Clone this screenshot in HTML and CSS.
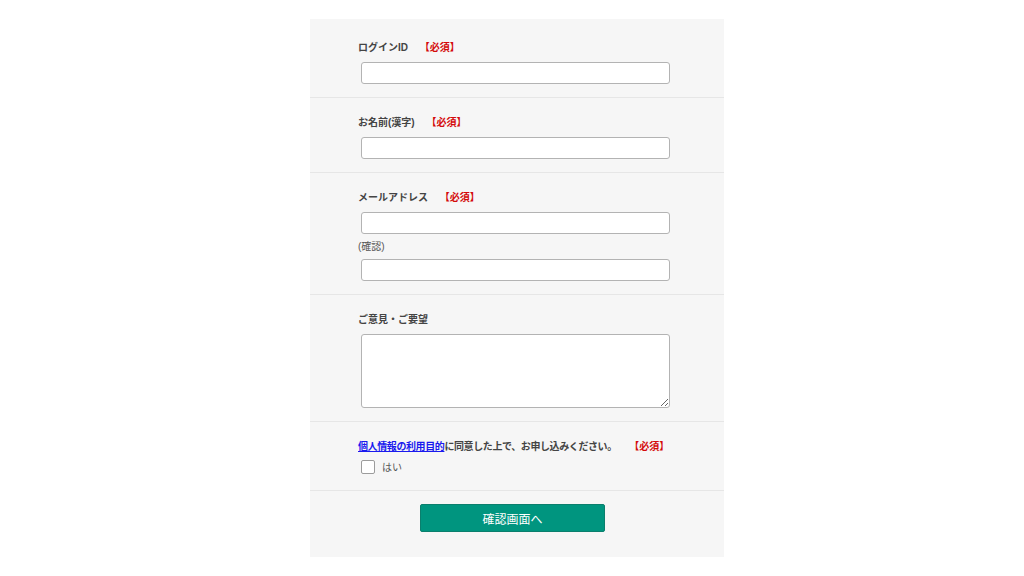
FILE: index.html
```html
<!DOCTYPE html>
<html lang="ja">
<head>
    <meta charset="UTF-8">
    <meta name="viewport" content="width=device-width, initial-scale=1.0">
    <title>お問い合わせ</title>
    <link rel="stylesheet" href="styles.css">
</head>
<body>

    <form class="form-box" onsubmit="return false;">

        <div class="row first">
            <p class="label">ログインID <span class="req">【必須】</span></p>
            <input type="text" class="field" id="loginId">
        </div>

        <div class="row">
            <p class="label">お名前(漢字) <span class="req">【必須】</span></p>
            <input type="text" class="field" id="name">
        </div>

        <div class="row">
            <p class="label">メールアドレス <span class="req">【必須】</span></p>
            <input type="email" class="field" id="email">
            <p class="sub-label">(確認)</p>
            <input type="email" class="field" id="emailConfirm">
        </div>

        <div class="row">
            <p class="label">ご意見・ご要望</p>
            <textarea class="field area" id="comment"></textarea>
        </div>

        <div class="row agree">
            <p class="label"><a href="#">個人情報の利用目的</a>に同意した上で、お申し込みください。 <span class="req wide">【必須】</span></p>
            <label class="check"><input type="checkbox" id="agree"> <span>はい</span></label>
        </div>

        <div class="row submit">
            <button type="submit" class="btn">確認画面へ</button>
        </div>

    </form>

</body>
</html>
```

FILE: styles.css
```css
body { margin: 0; background: #fff; font-family: "Liberation Sans", "Noto Sans CJK JP", sans-serif; color: #444; }
.form-box { width: 414px; margin: 19px 0 0 310px; background: #f6f6f6; padding-top: 4px; }
.row { padding: 18px 0 13px 48px; border-bottom: 1px solid #e6e6e6; }
.label { margin: 0 0 7px; font-size: 10px; line-height: 14px; font-weight: bold; color: #444; }
.req { color: #d40b0b; margin-left: 9px; }
.req.wide { margin-left: 10px; letter-spacing: 0; }
.label a { color: #1a1aee; text-decoration: underline; }
.sub-label { margin: 6px 0 5px; font-size: 10px; line-height: 14px; color: #555; }
.field { display: block; box-sizing: border-box; width: 309px; height: 22px; margin: 0 0 0 3px; padding: 2px 5px; border: 1px solid #b3b3b3; border-radius: 3px; background: #fff; font-size: 12px; }
.area { height: 74px; resize: vertical; }
.check { display: flex; align-items: center; gap: 7px; margin-left: 3px; font-size: 10px; color: #555; }
.check input { appearance: none; margin: 0; width: 14px; height: 14px; border: 1px solid #9c9c9c; border-radius: 2px; background: #fff; }
.agree { padding-bottom: 16px; }
.agree .label { margin-bottom: 5px; letter-spacing: -0.4px; }
.submit { border-bottom: none; padding: 13px 9px 25px 0; text-align: center; }
.btn { width: 185px; height: 28px; border: 1px solid #0b7f6d; border-radius: 2px; background: #00957f; color: #fff; font-family: "Liberation Sans", "Noto Sans CJK JP", sans-serif; font-size: 12px; cursor: pointer; }
```
